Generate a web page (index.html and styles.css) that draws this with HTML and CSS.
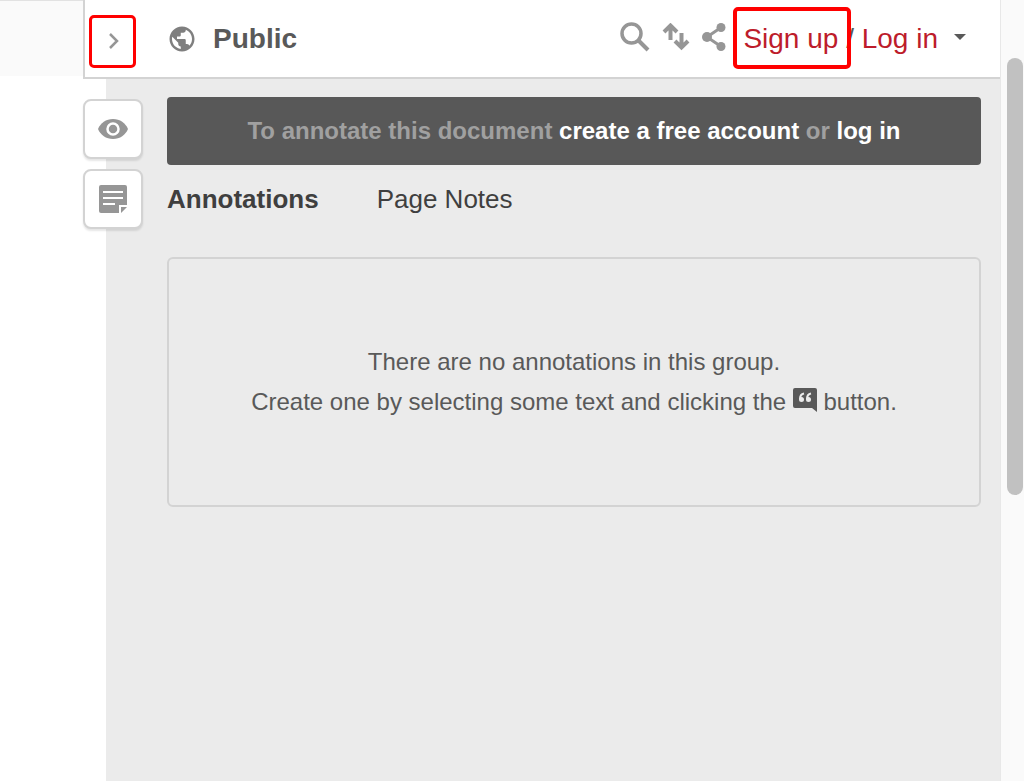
FILE: index.html
```html
<!DOCTYPE html>
<html lang="en">
<head>
  <meta charset="UTF-8">
  <meta name="viewport" content="width=device-width, initial-scale=1.0">
  <title>Annotations</title>
  <link rel="stylesheet" href="styles.css">
</head>
<body>

  <div class="host-page"></div>

  <div class="sidebar">
    <header class="topbar">
      <button class="collapse highlight" type="button" aria-label="Close sidebar">
        <svg width="16" height="18" viewBox="0 0 16 18"><path d="M5 2l7 7-7 7" fill="none" stroke="currentColor" stroke-width="2.500"/></svg>
      </button>
      <button class="group" type="button">
        <svg width="30" height="30" viewBox="0 0 24 24"><path fill="currentColor" d="M12 2C6.480 2 2 6.480 2 12s4.480 10 10 10 10-4.480 10-10S17.520 2 12 2zm-1 17.930c-3.950-.49-7-3.850-7-7.930 0-.62.080-1.210.21-1.790L9 15v1c0 1.100.9 2 2 2v1.930zm6.900-2.540c-.26-.81-1-1.390-1.900-1.390h-1v-3c0-.55-.45-1-1-1H8v-2h2c.55 0 1-.45 1-1V7h2c1.100 0 2-.9 2-2v-.41c2.930 1.190 5 4.060 5 7.410 0 2.080-.8 3.970-2.100 5.390z"/></svg>
        <span>Public</span>
      </button>
      <div class="actions">
        <button type="button" aria-label="Search">
          <svg width="30" height="30" viewBox="0 0 30 30" fill="none" stroke="currentColor"><circle cx="11.500" cy="11.500" r="9.500" stroke-width="3.500"/><path d="M18 18l10 10" stroke-width="4"/></svg>
        </button>
        <button type="button" aria-label="Sort">
          <svg width="28" height="28" viewBox="0 0 28 28" fill="none" stroke="currentColor" stroke-width="4"><path d="M8.500 17V3M2 9l6.500-6.500L15 9M19.500 10v14M13 18l6.500 6.500L26 18"/></svg>
        </button>
        <button type="button" aria-label="Share">
          <svg width="24" height="28" viewBox="0 0 24 28" fill="currentColor"><path d="M19 4.500L5 14l14 9.500" fill="none" stroke="currentColor" stroke-width="3"/><circle cx="19" cy="4.500" r="4.500"/><circle cx="5" cy="14" r="5"/><circle cx="19" cy="23.500" r="4.500"/></svg>
        </button>
      </div>
      <div class="account">
        <a href="#signup" class="signup">Sign up</a> / <a href="#login">Log in</a>
      </div>
      <button class="menu" type="button" aria-label="Account menu">
        <svg width="12" height="6" viewBox="0 0 12 6"><path d="M0 0h12L6 6z" fill="currentColor"/></svg>
      </button>
    </header>

    <div class="panel">
      <div class="toolbar">
        <button type="button" aria-label="Toggle highlights">
          <svg width="30" height="20" viewBox="0 0 30 20"><path fill="currentColor" d="M15 0C8 0 2.500 4 0 10c2.500 6 8 10 15 10s12.500-4 15-10C27.500 4 22 0 15 0z"/><circle cx="15" cy="10" r="5.500" fill="none" stroke="#fff" stroke-width="2.500"/></svg>
        </button>
        <button type="button" aria-label="New page note">
          <svg width="28" height="28" viewBox="0 0 28 28"><path fill="currentColor" d="M2 0h24a2 2 0 0 1 2 2v18h-8v8H2a2 2 0 0 1-2-2V2a2 2 0 0 1 2-2zM22 22h6l-6 6z"/><path d="M4 7h20M4 13h20M4 19h12" stroke="#fff" stroke-width="2"/></svg>
        </button>
      </div>

      <main class="content">
        <p class="banner">To annotate this document <a href="#signup">create a free account</a> or <a href="#login">log in</a></p>
        <nav class="tabs">
          <a href="#annotations" class="tab active">Annotations</a>
          <a href="#notes" class="tab">Page Notes</a>
        </nav>
        <div class="empty">
          <p>There are no annotations in this group.</p>
          <p>Create one by selecting some text and clicking the
            <svg width="24" height="24" viewBox="0 0 24 24"><path fill="currentColor" d="M2 0h20a2 2 0 0 1 2 2v22l-5-4H2a2 2 0 0 1-2-2V2a2 2 0 0 1 2-2z"/><g fill="none" stroke="#ebebeb" stroke-width="2"><path d="M11 5.500C8.500 6 7 8 7 11"/><path d="M18 5.500c-2.500.5-4 2.500-4 5.500"/></g><g fill="#ebebeb"><circle cx="8.500" cy="11.500" r="2.500"/><circle cx="15.500" cy="11.500" r="2.500"/></g></svg>
            button.</p>
        </div>
      </main>
    </div>
  </div>

  <div class="scroll-track"><div class="scroll-thumb"></div></div>

</body>
</html>
```
FILE: styles.css
```css
* {
  box-sizing: border-box;
}

body {
  margin: 0;
  min-height: 100vh;
  display: flex;
  background: #fff;
  color: #595959;
  font-family: "Liberation Sans", Arial, sans-serif;
}

p {
  margin: 0;
}

a {
  text-decoration: none;
}

button {
  display: flex;
  align-items: center;
  justify-content: center;
  padding: 0;
  border: 0;
  background: none;
  color: #969696;
  font: inherit;
  cursor: pointer;
}

.host-page {
  width: 83px;
  height: 76px;
  background: #fafafa;
  border-top: 1px solid #e2e2e2;
}

.sidebar {
  flex: 1;
  display: flex;
  flex-direction: column;
}

/* top bar */
.topbar {
  display: flex;
  align-items: center;
  height: 79px;
  padding-right: 34px;
  background: #fff;
  border-left: 2px solid #d3d3d3;
  border-bottom: 2px solid #d3d3d3;
  font-size: 28px;
}

.collapse {
  width: 47px;
  height: 53px;
  margin: 5px 0 0 4px;
}

.highlight {
  border: 3px solid #f00;
  border-radius: 5px;
}

.group {
  gap: 16px;
  margin-left: 31px;
  color: #7f7f7f;
}

.group span {
  color: #595959;
  font-weight: bold;
}

.actions {
  display: flex;
  align-items: center;
  gap: 12px;
  margin: 0 17px 4px auto;
}

.account {
  white-space: nowrap;
}

.account a {
  color: #bd1c2b;
}

.signup {
  position: relative;
}

/* marker box drawn over the link */
.signup::after {
  content: "";
  position: absolute;
  inset: -16px -13px -15px -10px;
  border: 4px solid #f00;
  border-radius: 5px;
}

.menu {
  margin: 0 0 4px 16px;
  color: #595959;
}

/* panel */
.panel {
  flex: 1;
  display: flex;
  align-items: flex-start;
  gap: 24px;
  margin-left: 23px;
  padding: 18px 19px 0 0;
  background: #ebebeb;
}

.toolbar {
  display: flex;
  flex-direction: column;
  gap: 10px;
  margin: 2px 0 0 -23px;
}

.toolbar button {
  width: 60px;
  height: 60px;
  background: #fff;
  border: 2px solid #d3d3d3;
  border-radius: 8px;
  box-shadow: 0 2px 2px rgba(0, 0, 0, 0.1);
}

.content {
  flex: 1;
}

.banner {
  padding: 18px;
  background: #585858;
  border-radius: 4px;
  color: #a0a0a0;
  font-size: 24px;
  font-weight: bold;
  line-height: 32px;
  text-align: center;
}

.banner a {
  color: #fff;
}

.tabs {
  display: flex;
  gap: 58px;
  padding-top: 18px;
  font-size: 26px;
  line-height: 32px;
}

.tab {
  color: #3f3f3f;
}

.tab.active {
  font-weight: bold;
}

.empty {
  margin-top: 42px;
  padding: 83px 20px;
  border: 2px solid #d3d3d3;
  border-radius: 6px;
  font-size: 24px;
  line-height: 40px;
  text-align: center;
}

.empty svg {
  vertical-align: -2px;
}

/* page scrollbar */
.scroll-track {
  width: 24px;
  padding: 58px 1px 0 6px;
  background: #fafafa;
  border-left: 1px solid #e8e8e8;
}

.scroll-thumb {
  height: 437px;
  border-radius: 8px;
  background: #c1c1c1;
}
```
